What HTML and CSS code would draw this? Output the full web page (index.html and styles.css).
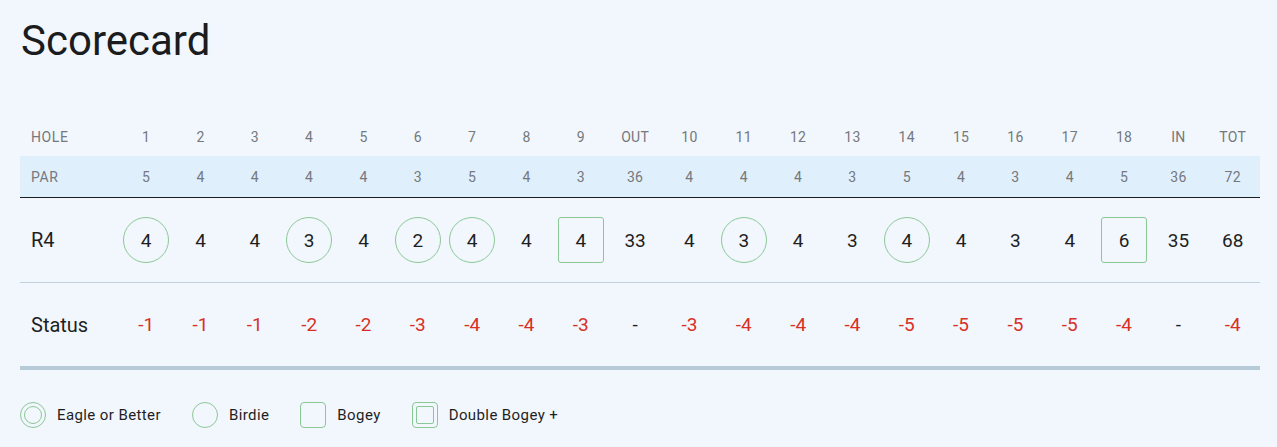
FILE: index.html
```html
<!DOCTYPE html>
<html>
<head>
<meta charset="utf-8">
<link rel="stylesheet" href="styles.css">
</head>
<body>
<div class="page">
  <h1 class="title">Scorecard</h1>
  <table class="card">
    <colgroup>
      <col class="c-label">
      <col span="21">
    </colgroup>
    <tr class="hole">
      <td class="lbl">HOLE</td><td>1</td><td>2</td><td>3</td><td>4</td><td>5</td><td>6</td><td>7</td><td>8</td><td>9</td><td>OUT</td><td>10</td><td>11</td><td>12</td><td>13</td><td>14</td><td>15</td><td>16</td><td>17</td><td>18</td><td>IN</td><td>TOT</td>
    </tr>
    <tr class="par">
      <td class="lbl">PAR</td><td>5</td><td>4</td><td>4</td><td>4</td><td>4</td><td>3</td><td>5</td><td>4</td><td>3</td><td>36</td><td>4</td><td>4</td><td>4</td><td>3</td><td>5</td><td>4</td><td>3</td><td>4</td><td>5</td><td>36</td><td>72</td>
    </tr>
    <tr class="score">
      <td class="lbl">R4</td>
      <td><span class="mark birdie">4</span></td>
      <td><span class="mark">4</span></td>
      <td><span class="mark">4</span></td>
      <td><span class="mark birdie">3</span></td>
      <td><span class="mark">4</span></td>
      <td><span class="mark birdie">2</span></td>
      <td><span class="mark birdie">4</span></td>
      <td><span class="mark">4</span></td>
      <td><span class="mark bogey">4</span></td>
      <td><span class="mark">33</span></td>
      <td><span class="mark">4</span></td>
      <td><span class="mark birdie">3</span></td>
      <td><span class="mark">4</span></td>
      <td><span class="mark">3</span></td>
      <td><span class="mark birdie">4</span></td>
      <td><span class="mark">4</span></td>
      <td><span class="mark">3</span></td>
      <td><span class="mark">4</span></td>
      <td><span class="mark bogey">6</span></td>
      <td><span class="mark">35</span></td>
      <td><span class="mark">68</span></td>
    </tr>
    <tr class="status">
      <td class="lbl">Status</td><td class="neg">-1</td><td class="neg">-1</td><td class="neg">-1</td><td class="neg">-2</td><td class="neg">-2</td><td class="neg">-3</td><td class="neg">-4</td><td class="neg">-4</td><td class="neg">-3</td><td>-</td><td class="neg">-3</td><td class="neg">-4</td><td class="neg">-4</td><td class="neg">-4</td><td class="neg">-5</td><td class="neg">-5</td><td class="neg">-5</td><td class="neg">-5</td><td class="neg">-4</td><td>-</td><td class="neg">-4</td>
    </tr>
  </table>
  <div class="legend">
    <div class="item"><span class="key circle double"></span><span>Eagle or Better</span></div>
    <div class="item"><span class="key circle"></span><span>Birdie</span></div>
    <div class="item"><span class="key square"></span><span>Bogey</span></div>
    <div class="item"><span class="key square double"></span><span>Double Bogey +</span></div>
  </div>
</div>
</body>
</html>
```

FILE: styles.css
```css
html, body {
  margin: 0;
  padding: 0;
  background: #f2f7fd;
}
body {
  font-family: Roboto, "Noto Sans", sans-serif;
  color: #1f1f1f;
}
.page {
  padding: 0 17px 0 20px;
}
.title {
  margin: 0;
  padding-top: 17px;
  padding-left: 1px;
  height: 117px;
  box-sizing: border-box;
  font-weight: 400;
  font-size: 42px;
  line-height: 48px;
  color: #1b1c1e;
}
.card {
  width: 1240px;
  border-collapse: collapse;
  table-layout: fixed;
}
.c-label {
  width: 99px;
}
.card td {
  text-align: center;
  padding: 0;
}
.card td.lbl {
  text-align: left;
  padding-left: 11px;
}
.hole td {
  height: 39px;
  font-size: 14px;
  letter-spacing: 0.3px;
  color: #75787c;
}
.par td {
  height: 41px;
  font-size: 14px;
  letter-spacing: 0.3px;
  color: #75787c;
  background: #e0effc;
  border-bottom: 1px solid #1b1c1e;
}
.score td {
  height: 84px;
  font-size: 19px;
  border-bottom: 1px solid #c3d1dd;
}
.card td.lbl {
  font-size: 20px;
}
.hole td.lbl, .par td.lbl {
  font-size: 14px;
  letter-spacing: 0.6px;
}
.mark {
  display: inline-flex;
  align-items: center;
  justify-content: center;
  width: 46px;
  height: 46px;
  box-sizing: border-box;
  vertical-align: middle;
}
.mark.birdie {
  border: 1px solid #8cc796;
  border-radius: 50%;
}
.mark.bogey {
  border: 1px solid #8cc796;
  border-radius: 3px;
}
.status td {
  height: 83px;
  font-size: 19px;
  border-bottom: 4px solid #b7cad7;
}
.status td.neg {
  color: #d93025;
}
.legend {
  display: flex;
  align-items: center;
  padding-top: 32px;
  font-size: 15px;
  letter-spacing: 0.4px;
  color: #1f1f1f;
}
.item {
  display: flex;
  align-items: center;
  gap: 11px;
  margin-right: 31px;
}
.key {
  width: 26px;
  height: 26px;
  box-sizing: border-box;
  border: 1px solid #8cc796;
  display: inline-flex;
  align-items: center;
  justify-content: center;
}
.key.circle {
  border-radius: 50%;
}
.key.square {
  border-radius: 4px;
}
.key.circle.double::after {
  content: "";
  width: 18px;
  height: 18px;
  box-sizing: border-box;
  border: 1px solid #8cc796;
  border-radius: 50%;
}
.key.square.double::after {
  content: "";
  width: 18px;
  height: 18px;
  box-sizing: border-box;
  border: 1px solid #8cc796;
  border-radius: 2px;
}
```
